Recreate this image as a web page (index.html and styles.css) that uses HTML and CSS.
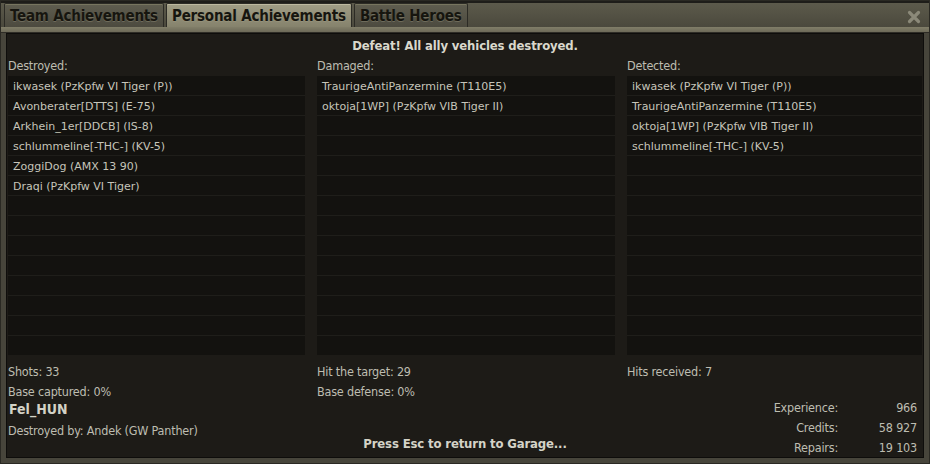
FILE: index.html
```html
<!DOCTYPE html>
<html lang="en">
<head>
    <meta charset="UTF-8">
    <title>Battle results</title>
    <link rel="stylesheet" href="styles.css">
</head>
<body>
  <div class="window">
    <div class="tabBar">
        <div class="tab">Team Achievements</div>
        <div class="tab active">Personal Achievements</div>
        <div class="tab">Battle Heroes</div>
        <div class="spacer"></div>
        <div class="close">
            <svg width="14" height="14" viewBox="0 0 14 14">
                <path d="M2.5 2.5 L11.5 11.5 M11.5 2.5 L2.5 11.5" stroke="#8b8979" stroke-width="3.2" stroke-linecap="round"/>
            </svg>
        </div>
    </div>
    <div class="band"></div>

    <div class="panel">
        <h1 class="title">Defeat! All ally vehicles destroyed.</h1>

        <div class="columns">
            <div class="col">
                <div class="label">Destroyed:</div>
                <div class="list">
                    <div class="row">ikwasek (PzKpfw VI Tiger (P))</div>
                    <div class="row">Avonberater[DTTS] (E-75)</div>
                    <div class="row">Arkhein_1er[DDCB] (IS-8)</div>
                    <div class="row">schlummeline[-THC-] (KV-5)</div>
                    <div class="row">ZoggiDog (AMX 13 90)</div>
                    <div class="row">Draqi (PzKpfw VI Tiger)</div>
                    <div class="row"></div><div class="row"></div><div class="row"></div><div class="row"></div>
                    <div class="row"></div><div class="row"></div><div class="row"></div><div class="row"></div>
                </div>
                <div class="stat">Shots: 33</div>
                <div class="stat">Base captured: 0%</div>
            </div>
            <div class="col">
                <div class="label">Damaged:</div>
                <div class="list">
                    <div class="row">TraurigeAntiPanzermine (T110E5)</div>
                    <div class="row">oktoja[1WP] (PzKpfw VIB Tiger II)</div>
                    <div class="row"></div><div class="row"></div><div class="row"></div><div class="row"></div>
                    <div class="row"></div><div class="row"></div><div class="row"></div><div class="row"></div>
                    <div class="row"></div><div class="row"></div><div class="row"></div><div class="row"></div>
                </div>
                <div class="stat">Hit the target: 29</div>
                <div class="stat">Base defense: 0%</div>
            </div>
            <div class="col">
                <div class="label">Detected:</div>
                <div class="list">
                    <div class="row">ikwasek (PzKpfw VI Tiger (P))</div>
                    <div class="row">TraurigeAntiPanzermine (T110E5)</div>
                    <div class="row">oktoja[1WP] (PzKpfw VIB Tiger II)</div>
                    <div class="row">schlummeline[-THC-] (KV-5)</div>
                    <div class="row"></div><div class="row"></div><div class="row"></div><div class="row"></div>
                    <div class="row"></div><div class="row"></div><div class="row"></div><div class="row"></div>
                    <div class="row"></div><div class="row"></div>
                </div>
                <div class="stat">Hits received: 7</div>
            </div>
        </div>

        <div class="footer">
            <div class="player">
                <div class="name">Fel_HUN</div>
                <div class="stat">Destroyed by: Andek (GW Panther)</div>
            </div>
            <div class="hint">Press Esc to return to Garage...</div>
            <div class="totals">
                <span>Experience:</span><span>966</span>
                <span>Credits:</span><span>58 927</span>
                <span>Repairs:</span><span>19 103</span>
            </div>
        </div>
    </div>
  </div>
</body>
</html>
```

FILE: styles.css
```css
body {
    margin: 0;
    background: #111;
    font-family: "DejaVu Sans Condensed", "Liberation Sans", sans-serif;
    font-stretch: condensed;
}

.window {
    width: 930px;
    height: 464px;
    box-sizing: border-box;
    background: #47453b;
    border: 1px solid #2a2923;
    display: flex;
    flex-direction: column;
}

.tabBar {
    flex-shrink: 0;
    height: 24px;
    display: flex;
    align-items: flex-end;
    padding-left: 3px;
    background: linear-gradient(#5c5a4b, #4b493d);
    border-top: 2px solid #1e1d19;
}

.tab {
    height: 23px;
    line-height: 25px;
    padding: 0 5px 0 5px;
    margin-right: 2px;
    font-size: 15px;
    letter-spacing: -0.2px;
    font-weight: bold;
    color: #16150f;
    text-shadow: 0 1px 0 rgba(170, 165, 140, 0.35);
    background: linear-gradient(#5f5d4f, #4c4a3f);
    border: 1px solid #2c2b25;
    border-bottom: none;
    border-radius: 2px 2px 0 0;
    box-shadow: inset 0 1px 0 #77755f;
}

.tab.active {
    background: linear-gradient(#a19e86, #85826c);
    box-shadow: inset 0 1px 0 #bdb9a0;
}

.spacer { flex: 1; }

.close {
    align-self: center;
    margin-right: 8px;
    margin-top: 2px;
    height: 14px;
}

.band {
    flex-shrink: 0;
    height: 5px;
    background: linear-gradient(#817e69, #6d6a58);
    border-bottom: 1px solid #2e2c26;
}

.panel {
    flex: 1;
    min-height: 0;
    margin: 0 5px 5px 5px;
    padding: 2px 1px 0 1px;
    background: #1d1b17;
    border: 1px solid #0e0d0b;
    display: flex;
    flex-direction: column;
}

.title {
    margin: 0;
    font-size: 13px;
    letter-spacing: -0.15px;
    line-height: 20px;
    font-weight: bold;
    text-align: center;
    color: #d9d8cc;
}

.columns {
    display: grid;
    grid-template-columns: 297px 298px 1fr;
    column-gap: 12px;
}

.label, .stat {
    font-size: 12.5px;
    letter-spacing: -0.2px;
    line-height: 20px;
    color: #bebdb1;
}

.list {
    background: #13120f;
    margin-bottom: 7px;
}

.row {
    height: 19px;
    line-height: 21px;
    border-bottom: 1px solid #1f1e1a;
    padding-left: 5px;
    font-family: "DejaVu Sans", "Liberation Sans", sans-serif;
    font-stretch: normal;
    font-size: 11px;
    letter-spacing: 0;
    color: #c6c5ba;
}

.row:last-child { border-bottom: none; }

.footer {
    flex: 1;
    display: grid;
    grid-template-columns: 1fr auto 1fr;
    margin-top: -5px;
}

.name {
    font-size: 14px;
    line-height: 20px;
    padding-top: 2px;
    margin-bottom: 2px;
    font-weight: bold;
    color: #d3d2c6;
    padding-left: 1px;
}

.hint {
    align-self: end;
    margin-bottom: 6px;
    font-size: 13px;
    letter-spacing: -0.15px;
    font-weight: bold;
    color: #d4d3c7;
}

.totals {
    justify-self: end;
    display: grid;
    grid-template-columns: auto 79px;
    grid-auto-rows: 20px;
    align-items: center;
    padding-right: 5px;
    font-size: 12.5px;
    letter-spacing: -0.2px;
    color: #bebdb1;
    text-align: right;
}
```
